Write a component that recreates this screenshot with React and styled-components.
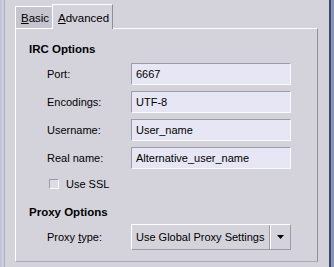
import React from "react";
import styled, { createGlobalStyle } from "styled-components";

const Global = createGlobalStyle`
  html, body { margin: 0; padding: 0; background: #d4d3dc; }
  body { font-family: "Liberation Sans", Arial, sans-serif; font-size: 11px; color: #000; }
`;

const Frame = styled.div`
  width: 334px;
  height: 267px;
  display: flex;
  background: #d4d3dc;
  overflow: hidden;
`;

const LeftEdge = styled.div`
  width: 5px;
  flex: none;
  border-left: 2px solid #c3c6d8;
  border-right: 1px solid #a9adc2;
  background: #d0d0dc;
  box-sizing: border-box;
`;

const RightEdge = styled.div`
  width: 5px;
  flex: none;
  border-left: 2px solid #3b4a6b;
  background: #8a96b4;
  box-sizing: border-box;
`;

const Main = styled.div`
  flex: 1;
  padding: 4px 11px 0 10px;
  display: flex;
  flex-direction: column;
`;

const TabStrip = styled.div`
  display: flex;
  align-items: flex-end;
  height: 24px;
  position: relative;
  z-index: 1;
`;

const Tab = styled.div`
  box-sizing: border-box;
  width: ${(p) => (p.$active ? "61px" : "37px")};
  height: ${(p) => (p.$active ? "25px" : "22px")};
  margin-bottom: ${(p) => (p.$active ? "-1px" : "0")};
  padding: 1px 0 0 ${(p) => (p.$active ? "5px" : "5px")};
  background: ${(p) => (p.$active ? "#d4d3dc" : "#c6c5cf")};
  border-top: 1px solid #fff;
  border-left: 1px solid #fff;
  border-right: 1px solid ${(p) => (p.$active ? "#8e8e98" : "#c6c5cf")};
  display: flex;
  align-items: center;
  font-size: 11.5px;
  white-space: nowrap;
`;

const U = styled.span`
  text-decoration: underline;
`;

const Panel = styled.div`
  box-sizing: border-box;
  width: 303px;
  height: 234px;
  border-top: 1px solid #fff;
  border-left: 1px solid #fff;
  border-right: 1px solid #8e8e98;
  border-bottom: 1px solid #a8a8b2;
  padding: 13px 0 0 13px;
  display: flex;
  flex-direction: column;
`;

const Heading = styled.div`
  font-weight: bold;
  font-size: 11.5px;
  line-height: 14px;
  margin-bottom: ${(p) => p.$mb || 0}px;
`;

const Rows = styled.div`
  display: flex;
  flex-direction: column;
  gap: 6px;
  padding-left: 18px;
`;

const Row = styled.div`
  display: flex;
  align-items: center;
  height: ${(p) => p.$h || 22}px;
  margin-top: ${(p) => p.$mt || 0}px;
`;

const Label = styled.div`
  width: 84px;
  flex: none;
  white-space: nowrap;
`;

const Field = styled.div`
  box-sizing: border-box;
  width: 160px;
  height: 22px;
  background: #e6e6f4;
  border-top: 1px solid #9c9ca6;
  border-left: 1px solid #9c9ca6;
  border-bottom: 1px solid #fafaff;
  border-right: 1px solid #fafaff;
  padding: 0 4px;
  display: flex;
  align-items: center;
  font-size: 11px;
  white-space: nowrap;
`;

const CheckRow = styled.div`
  display: flex;
  align-items: center;
  gap: 7px;
  padding-left: 20px;
  margin-top: 8px;
  margin-bottom: 14px;
  height: 14px;
`;

const Box = styled.div`
  box-sizing: border-box;
  width: 10px;
  height: 10px;
  background: #dcdce6;
  border-top: 1px solid #9c9ca6;
  border-left: 1px solid #9c9ca6;
  border-bottom: 1px solid #fafaff;
  border-right: 1px solid #fafaff;
`;

const Combo = styled.div`
  box-sizing: border-box;
  width: 160px;
  height: 26px;
  display: flex;
  border-top: 1px solid #fff;
  border-left: 1px solid #fff;
  border-right: 1px solid #9c9ca6;
  border-bottom: 1px solid #9c9ca6;
  background: #d4d3dc;
`;

const ComboText = styled.div`
  flex: 1;
  display: flex;
  align-items: center;
  padding-left: 4px;
  font-size: 11px;
  white-space: nowrap;
  border-right: 1px solid #9c9ca6;
`;

const ComboArrow = styled.div`
  width: 19px;
  border-left: 1px solid #fff;
  display: flex;
  align-items: center;
  justify-content: center;
`;

export default function App() {
  return (
    <Frame>
      <Global />
      <LeftEdge />
      <Main>
        <TabStrip>
          <Tab>
            <span><U>B</U>asic</span>
          </Tab>
          <Tab $active>
            <span><U>A</U>dvanced</span>
          </Tab>
        </TabStrip>
        <Panel>
          <Heading $mb={7}>IRC Options</Heading>
          <Rows>
            <Row><Label>Port:</Label><Field>6667</Field></Row>
            <Row><Label>Encodings:</Label><Field>UTF-8</Field></Row>
            <Row><Label>Username:</Label><Field>User_name</Field></Row>
            <Row><Label>Real name:</Label><Field>Alternative_user_name</Field></Row>
          </Rows>
          <CheckRow>
            <Box />
            <span>Use SSL</span>
          </CheckRow>
          <Heading>Proxy Options</Heading>
          <Rows>
            <Row $h={26} $mt={5}>
              <Label>Proxy <U>t</U>ype:</Label>
              <Combo>
                <ComboText>Use Global Proxy Settings</ComboText>
                <ComboArrow>
                  <svg width="7" height="4" viewBox="0 0 7 4">
                    <path d="M0 0H7L3.5 4Z" fill="#000" />
                  </svg>
                </ComboArrow>
              </Combo>
            </Row>
          </Rows>
        </Panel>
      </Main>
      <RightEdge />
    </Frame>
  );
}
